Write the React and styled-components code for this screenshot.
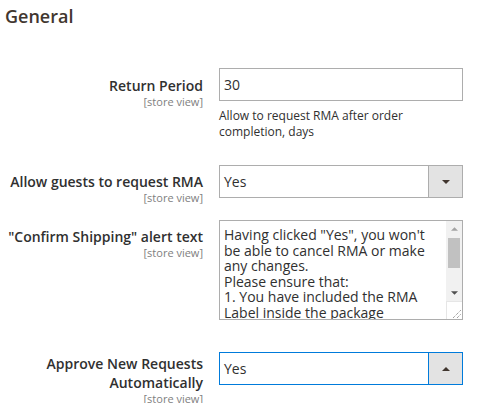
import React from "react";
import styled, { createGlobalStyle } from "styled-components";

const GlobalStyle = createGlobalStyle`
  body {
    margin: 0;
    background: #fff;
    font-family: "Open Sans", "Liberation Sans", sans-serif;
    color: #303030;
  }
`;

const Section = styled.div`
  width: 477px;
`;

const Title = styled.h3`
  margin: 4px 0 0 5px;
  font-size: 18px;
  font-weight: 600;
  line-height: 1.36;
  color: #41362f;
`;

const Row = styled.div`
  display: grid;
  grid-template-columns: 203px 244px;
  column-gap: 16px;
  align-items: start;
  margin-top: ${(p) => p.$gap}px;
`;

const Label = styled.div`
  padding-top: ${(p) => p.$offset}px;
  text-align: right;
`;

const Name = styled.div`
  font-size: 14px;
  font-weight: 600;
  line-height: 19px;
  color: #303030;
`;

const Scope = styled.div`
  margin-top: 2px;
  font-size: 11px;
  line-height: 9px;
  color: #808080;
`;

const Control = styled.div`
  display: flex;
  flex-direction: column;
`;

const Input = styled.div`
  box-sizing: border-box;
  height: 33px;
  padding: 0 4px;
  border: 1px solid #adadad;
  font-size: 14px;
  line-height: 31px;
  color: #303030;
`;

const Note = styled.div`
  margin-top: 7px;
  font-size: 12px;
  line-height: 15.5px;
  color: #303030;
`;

const Select = styled.div`
  box-sizing: border-box;
  display: flex;
  height: 33px;
  border: 1px solid ${(p) => (p.$focused ? "#007bdb" : "#adadad")};
`;

const SelectValue = styled.div`
  flex: 1;
  padding: 0 4px;
  font-size: 14px;
  line-height: 31px;
  color: #303030;
`;

const SelectButton = styled.div`
  width: 33px;
  display: flex;
  align-items: center;
  justify-content: center;
  background: #e3e3e3;
  border-left: 1px solid ${(p) => (p.$focused ? "#007bdb" : "#adadad")};
`;

const TextBox = styled.div`
  box-sizing: border-box;
  display: flex;
  height: 100px;
  border: 1px solid #adadad;
`;

const TextBody = styled.div`
  flex: 1;
  overflow: hidden;
  padding: 6px 8px 0 4px;
  font-size: 14px;
  line-height: 15.5px;
  white-space: pre-wrap;
  color: #303030;
`;

const ScrollBar = styled.div`
  width: 16px;
  display: flex;
  flex-direction: column;
  background: #f1f1f1;
`;

const ScrollArrow = styled.div`
  height: 16px;
  display: flex;
  align-items: center;
  justify-content: center;
`;

const Track = styled.div`
  flex: 1;
  padding: 1px 2px 0;
`;

const Thumb = styled.div`
  height: 30px;
  background: #c1c1c1;
`;

const Corner = styled.div`
  height: 17px;
  display: flex;
  align-items: flex-end;
  justify-content: flex-end;
  background: #fff;
  border-left: 1px solid #e6e6e6;
  border-top: 1px solid #e6e6e6;
`;

const Caret = ({ up, color = "#41362f", w = 8, h = 4 }) => (
  <svg width={w} height={h} viewBox="0 0 8 4">
    <polygon points={up ? "0,4 8,4 4,0" : "0,0 8,0 4,4"} fill={color} />
  </svg>
);

const Grip = () => (
  <svg width="10" height="10" viewBox="0 0 10 10">
    <line x1="1" y1="9" x2="9" y2="1" stroke="#7a7a7a" strokeWidth="1" strokeDasharray="1 1" />
    <line x1="5" y1="9" x2="9" y2="5" stroke="#7a7a7a" strokeWidth="1" strokeDasharray="1 1" />
  </svg>
);

const FieldLabel = ({ offset, children }) => (
  <Label $offset={offset}>
    <Name>{children}</Name>
    <Scope>[store view]</Scope>
  </Label>
);

const alertText =
  'Having clicked "Yes", you won\'t be able to cancel RMA or make any changes.\n' +
  "Please ensure that:\n" +
  "1. You have included the RMA Label inside the package\n" +
  "2. The package is sealed and ready to be shipped";

export default function App() {
  return (
    <>
      <GlobalStyle />
      <Section>
        <Title>General</Title>

        <Row $gap={40}>
          <FieldLabel offset={8}>Return Period</FieldLabel>
          <Control>
            <Input>30</Input>
            <Note>Allow to request RMA after order completion, days</Note>
          </Control>
        </Row>

        <Row $gap={26}>
          <FieldLabel offset={7}>Allow guests to request RMA</FieldLabel>
          <Control>
            <Select>
              <SelectValue>Yes</SelectValue>
              <SelectButton>
                <Caret />
              </SelectButton>
            </Select>
          </Control>
        </Row>

        <Row $gap={18}>
          <FieldLabel offset={7}>"Confirm Shipping" alert text</FieldLabel>
          <Control>
            <TextBox>
              <TextBody>{alertText}</TextBody>
              <ScrollBar>
                <ScrollArrow>
                  <Caret up color="#a3a3a3" w={7} h={4} />
                </ScrollArrow>
                <Track>
                  <Thumb />
                </Track>
                <ScrollArrow>
                  <Caret color="#505050" w={7} h={4} />
                </ScrollArrow>
                <Corner>
                  <Grip />
                </Corner>
              </ScrollBar>
            </TextBox>
          </Control>
        </Row>

        <Row $gap={32}>
          <FieldLabel offset={2}>Approve New Requests Automatically</FieldLabel>
          <Control>
            <Select $focused>
              <SelectValue>Yes</SelectValue>
              <SelectButton $focused>
                <Caret up />
              </SelectButton>
            </Select>
          </Control>
        </Row>
      </Section>
    </>
  );
}
